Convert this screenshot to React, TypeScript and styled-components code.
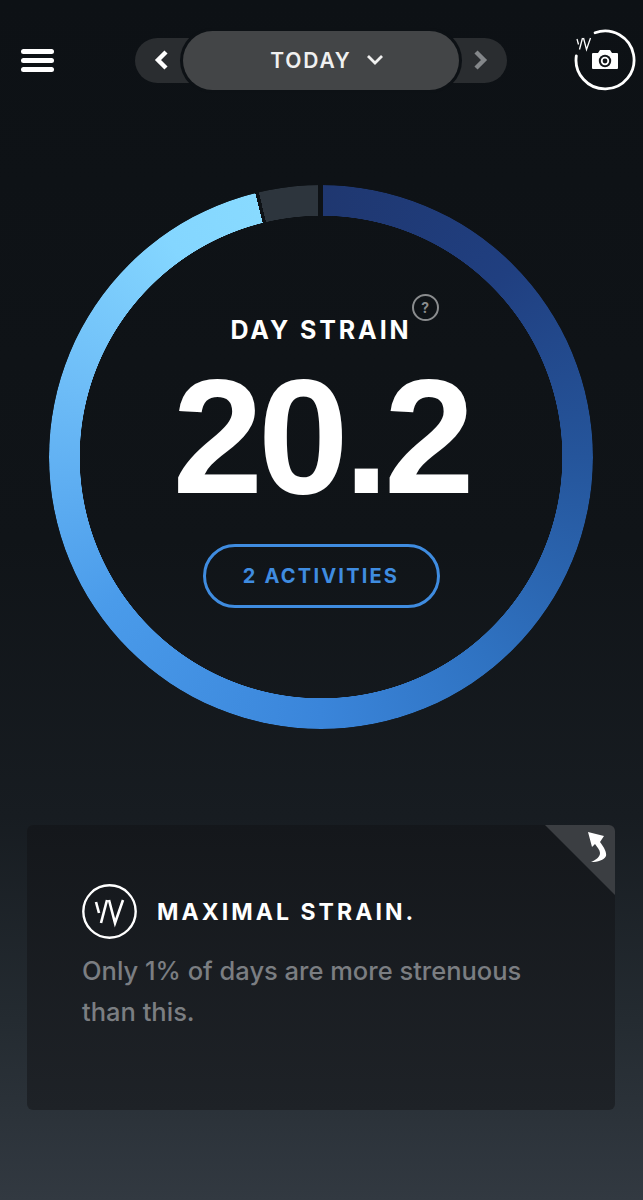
import styled, { createGlobalStyle } from 'styled-components';

const WhoopMark = () => (
  <g fill="none" stroke="currentColor" strokeWidth="2.6" strokeLinecap="butt">
    <path d="M14 18l3 11" />
    <path d="M25 16l-6 23" />
    <path d="M27 16l6 23 8-23" />
  </g>
);

const App = () => {
  return (
    <Page>
      <GlobalStyle />
      <Header>
        <MenuButton>
          <span />
          <span />
          <span />
        </MenuButton>

        <DateNav>
          <NavArrow>
            <svg width="16" height="22" viewBox="0 0 16 22">
              <path d="M12 3l-8 8 8 8" fill="none" stroke="#fff" strokeWidth="4.4" />
            </svg>
          </NavArrow>
          <DatePill>
            TODAY
            <svg width="18" height="12" viewBox="0 0 18 12">
              <path d="M2 2l7 7 7-7" fill="none" stroke="#f0f0f0" strokeWidth="2.8" />
            </svg>
          </DatePill>
          <NavArrow>
            <svg width="16" height="22" viewBox="0 0 16 22">
              <path d="M4 3l8 8-8 8" fill="none" stroke="#84878a" strokeWidth="4.4" />
            </svg>
          </NavArrow>
        </DateNav>

        <CameraBadge>
          <svg width="66" height="66" viewBox="0 0 66 66">
            <path
              d="M23.1 5.7A29 29 0 1 1 4.3 29"
              fill="none"
              stroke="#fff"
              strokeWidth="2.8"
              strokeLinecap="round"
            />
            <g transform="translate(-2 3) scale(.5)" color="#fff">
              <WhoopMark />
            </g>
            <path
              d="M21 26h5l2-3h10l2 3h5a1 1 0 0 1 1 1v14a1 1 0 0 1-1 1H21a1 1 0 0 1-1-1V27a1 1 0 0 1 1-1z"
              fill="#fff"
            />
            <circle cx="33" cy="34" r="6.200" fill="#14171a" />
            <circle cx="33" cy="34" r="4.200" fill="#fff" />
            <circle cx="33" cy="34" r="2.400" fill="#14171a" />
          </svg>
        </CameraBadge>
      </Header>

      <StrainRing>
        <StrainLabel>
          DAY STRAIN
          <HelpBadge>?</HelpBadge>
        </StrainLabel>
        <StrainValue>20.2</StrainValue>
        <ActivitiesButton>2 ACTIVITIES</ActivitiesButton>
      </StrainRing>

      <InsightCard>
        <CornerFold>
          <svg width="19" height="31" viewBox="0 0 19 31">
            <path
              d="M0 0l16 4-4 6c4 5 7 11 6 14-2 4-8 6-15 6 5-2 9-5 9-9 0-3-3-6-5-9l-3 3z"
              fill="#fff"
            />
          </svg>
        </CornerFold>
        <InsightHeading>
          <LogoCircle>
            <svg width="55" height="55" viewBox="0 0 55 55">
              <circle cx="27.500" cy="27.500" r="26.200" fill="none" stroke="#fff" strokeWidth="2.400" />
              <WhoopMark />
            </svg>
          </LogoCircle>
          <InsightTitle>MAXIMAL STRAIN.</InsightTitle>
        </InsightHeading>
        <InsightBody>Only 1% of days are more strenuous than this.</InsightBody>
      </InsightCard>
    </Page>
  );
};

const GlobalStyle = createGlobalStyle`
  html,
  body {
    margin: 0;
    padding: 0;
    background: #0d1115;
  }

  * {
    box-sizing: border-box;
  }
`;

const Page = styled.div`
  width: 643px;
  height: 1200px;
  overflow: hidden;
  padding-top: 27px;
  font-family: Inter, Lato, sans-serif;
  color: #fff;
  background: linear-gradient(
    180deg,
    #0d1115 0%,
    #101418 45%,
    #171c21 68%,
    #242b31 85%,
    #323941 100%
  );
`;

const Header = styled.header`
  display: grid;
  grid-template-columns: 114px 372px 1fr;
  align-items: center;
  height: 66px;
  padding-left: 21px;
`;

const MenuButton = styled.div`
  display: flex;
  flex-direction: column;
  gap: 4px;
  width: 33px;

  span {
    display: block;
    height: 5px;
    border-radius: 3px;
    background-color: #fff;
  }
`;

const DateNav = styled.nav`
  display: flex;
  align-items: center;
  height: 45px;
  border-radius: 23px;
  background-color: #2a2d30;
`;

const NavArrow = styled.div`
  flex-shrink: 0;
  display: flex;
  align-items: center;
  justify-content: center;
  width: 48px;
  height: 100%;
  padding-left: 6px;

  &:last-child {
    padding-left: 0;
    padding-right: 6px;
  }
`;

const DatePill = styled.div`
  flex: 1;
  display: flex;
  align-items: center;
  justify-content: center;
  gap: 14px;
  height: 59px;
  margin: -7px 0;
  padding-left: 12px;
  border-radius: 30px;
  font-size: 21px;
  font-weight: 600;
  letter-spacing: 1.800px;
  color: #f0f0f0;
  background-color: #434547;
  box-shadow: 0 0 0 3px #0d1115;
`;

const CameraBadge = styled.div`
  display: flex;
  justify-content: flex-end;
  padding-right: 5px;
`;

const StrainRing = styled.section`
  position: relative;
  display: flex;
  flex-direction: column;
  align-items: center;
  width: 544px;
  height: 544px;
  margin: 92px 0 0 49px;
  padding-top: 129px;

  &::before {
    content: '';
    position: absolute;
    inset: 0;
    border-radius: 50%;
    background: conic-gradient(
      #0e1216 0deg,
      #0e1216 0.400deg,
      #1f3770 0.400deg,
      #203f80 45deg,
      #25559b 90deg,
      #2f72c1 140deg,
      #3a85da 180deg,
      #4a9bea 235deg,
      #6dbcf7 285deg,
      #84d6ff 325deg,
      #88daff 346deg,
      #0e1216 346deg,
      #0e1216 346.800deg,
      #2d353d 346.800deg,
      #2d353d 359.400deg,
      #0e1216 359.400deg
    );
    -webkit-mask: radial-gradient(circle, transparent 241px, #000 241.500px);
    mask: radial-gradient(circle, transparent 241px, #000 241.500px);
  }
`;

const StrainLabel = styled.h1`
  position: relative;
  margin: 0;
  font-size: 25px;
  line-height: 32px;
  font-weight: 700;
  letter-spacing: 2.900px;
`;

const HelpBadge = styled.span`
  position: absolute;
  top: -20px;
  right: -27px;
  display: flex;
  align-items: center;
  justify-content: center;
  width: 27px;
  height: 27px;
  border: 2px solid #8a8c8e;
  border-radius: 50%;
  font-size: 14px;
  font-weight: 700;
  letter-spacing: 0;
  color: #8a8c8e;
`;

const StrainValue = styled.div`
  margin-top: 16px;
  font-family: 'Liberation Sans', Arial, sans-serif;
  font-size: 163px;
  line-height: 150px;
  font-weight: 700;
  letter-spacing: -5px;
`;

const ActivitiesButton = styled.div`
  display: flex;
  align-items: center;
  justify-content: center;
  width: 237px;
  height: 64px;
  margin-top: 32px;
  border: 3.500px solid #3f8ce0;
  border-radius: 32px;
  font-size: 20px;
  font-weight: 700;
  letter-spacing: 2.200px;
  color: #3f8ce0;
`;

const InsightCard = styled.section`
  position: relative;
  width: 588px;
  height: 285px;
  margin: 96px 0 0 27px;
  padding: 59px 55px 0;
  border-radius: 6px;
  overflow: hidden;
  background: linear-gradient(180deg, #14171b 0%, #1e2227 100%);
`;

const CornerFold = styled.div`
  position: absolute;
  top: 0;
  right: 0;
  display: flex;
  justify-content: flex-end;
  width: 70px;
  height: 70px;
  padding: 7px 8px 0 0;
  background-color: #3b3e42;
  clip-path: polygon(0 0, 100% 0, 100% 100%);
`;

const InsightHeading = styled.div`
  display: flex;
  align-items: center;
  gap: 20px;
`;

const LogoCircle = styled.div`
  display: flex;
  flex-shrink: 0;
  width: 55px;
  height: 55px;
`;

const InsightTitle = styled.h2`
  margin: 0;
  font-size: 23px;
  font-weight: 700;
  letter-spacing: 3.050px;
`;

const InsightBody = styled.p`
  margin: 11px 0 0;
  width: 460px;
  font-size: 25.500px;
  line-height: 41px;
  font-weight: 500;
  color: #7b7e82;
`;

export default App;
